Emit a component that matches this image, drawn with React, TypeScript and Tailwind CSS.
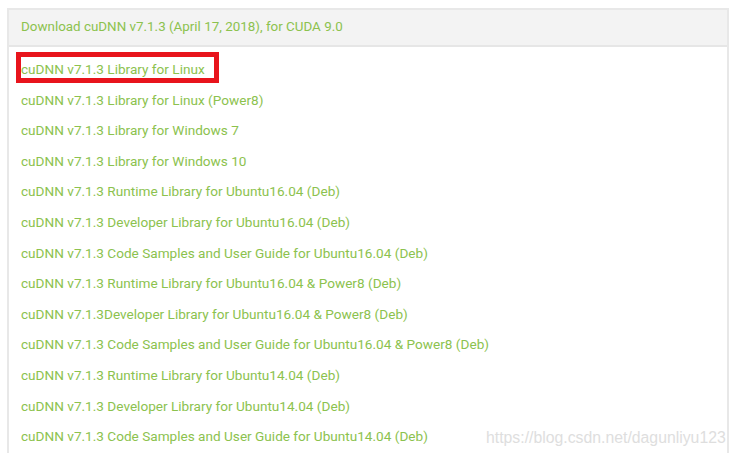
import React from "react";

const links = [
  "cuDNN v7.1.3 Library for Linux",
  "cuDNN v7.1.3 Library for Linux (Power8)",
  "cuDNN v7.1.3 Library for Windows 7",
  "cuDNN v7.1.3 Library for Windows 10",
  "cuDNN v7.1.3 Runtime Library for Ubuntu16.04 (Deb)",
  "cuDNN v7.1.3 Developer Library for Ubuntu16.04 (Deb)",
  "cuDNN v7.1.3 Code Samples and User Guide for Ubuntu16.04 (Deb)",
  "cuDNN v7.1.3 Runtime Library for Ubuntu16.04 & Power8 (Deb)",
  "cuDNN v7.1.3Developer Library for Ubuntu16.04 & Power8 (Deb)",
  "cuDNN v7.1.3 Code Samples and User Guide for Ubuntu16.04 & Power8 (Deb)",
  "cuDNN v7.1.3 Runtime Library for Ubuntu14.04 (Deb)",
  "cuDNN v7.1.3 Developer Library for Ubuntu14.04 (Deb)",
  "cuDNN v7.1.3 Code Samples and User Guide for Ubuntu14.04 (Deb)",
];

export default function App() {
  return (
    <div className="relative w-[736px] h-[453px] overflow-hidden bg-white" style={{ fontFamily: "Roboto, 'Liberation Sans', sans-serif" }}>
      <div className="ml-[7px] mt-[8px] w-[722px] h-[460px] border-2 border-[#e8e8e8]">
        <div className="h-[37px] bg-[#f3f3f3] border-b-2 border-[#e6e6e6] flex items-center pl-[12px] text-[13.4px] text-[#8cc24e]">
          Download cuDNN v7.1.3 (April 17, 2018), for CUDA 9.0
        </div>
        <div className="relative pt-[7px] pl-[12px]">
          {links.map((t) => (
            <div key={t} className="h-[30.6px] flex items-center text-[13.6px] text-[#8cc24e]">
              {t}
            </div>
          ))}
          <div className="absolute left-[7px] top-[5px] w-[203px] h-[31px] border-[5px] border-[#e8141c]" />
        </div>
      </div>
      <div
        className="absolute left-[486px] top-[426px] text-[15.8px] text-[#dedede]"
        style={{ fontFamily: "'Liberation Sans', Arial, sans-serif" }}
      >
        https://blog.csdn.net/dagunliyu123
      </div>
    </div>
  );
}
